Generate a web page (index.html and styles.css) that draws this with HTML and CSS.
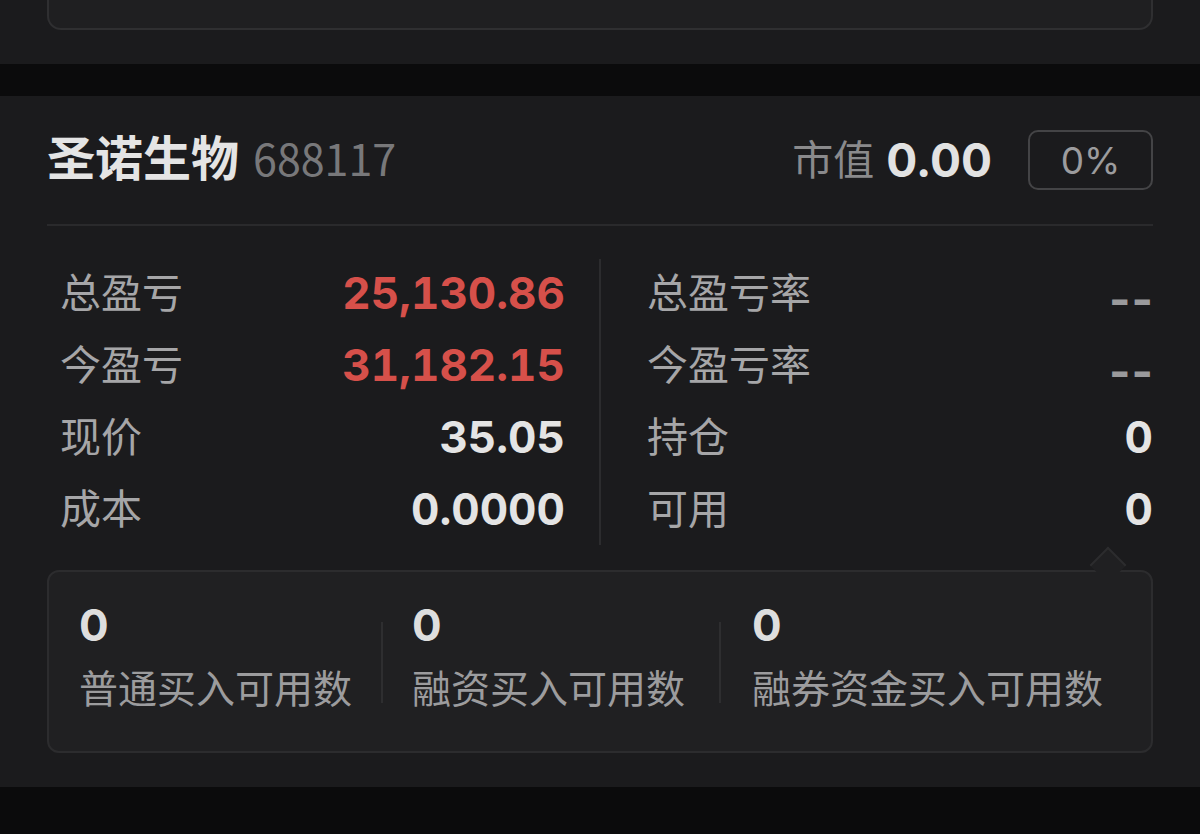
FILE: index.html
```html
<!DOCTYPE html>
<html lang="zh-CN">
<head>
<meta charset="utf-8">
<title>持仓</title>
<link rel="stylesheet" href="styles.css">
</head>
<body>
  <section class="section prev">
    <div class="prev-card"></div>
  </section>
  <div class="band"></div>
  <section class="section panel">
    <header class="head">
      <div class="name">
        <span class="title">圣诺生物</span>
        <span class="code">688117</span>
      </div>
      <div class="mv">
        <span class="mv-label">市值</span>
        <span class="mv-value">0.00</span>
        <span class="badge">0%</span>
      </div>
    </header>
    <div class="stats">
      <div class="col col-left">
        <div class="row"><span class="label">总盈亏</span><span class="val red">25,130.86</span></div>
        <div class="row"><span class="label">今盈亏</span><span class="val red">31,182.15</span></div>
        <div class="row"><span class="label">现价</span><span class="val">35.05</span></div>
        <div class="row"><span class="label">成本</span><span class="val">0.0000</span></div>
      </div>
      <div class="vline"></div>
      <div class="col col-right">
        <div class="row"><span class="label">总盈亏率</span><span class="val dash">--</span></div>
        <div class="row"><span class="label">今盈亏率</span><span class="val dash">--</span></div>
        <div class="row"><span class="label">持仓</span><span class="val">0</span></div>
        <div class="row"><span class="label">可用</span><span class="val">0</span></div>
      </div>
    </div>
    <div class="tip">
      <span class="tip-arrow"></span>
      <div class="tip-item">
        <div class="tip-num">0</div>
        <div class="tip-label">普通买入可用数</div>
      </div>
      <div class="tip-sep"></div>
      <div class="tip-item">
        <div class="tip-num">0</div>
        <div class="tip-label">融资买入可用数</div>
      </div>
      <div class="tip-sep tip-sep-wide"></div>
      <div class="tip-item">
        <div class="tip-num">0</div>
        <div class="tip-label">融券资金买入可用数</div>
      </div>
    </div>
  </section>
</body>
</html>
```

FILE: styles.css
```css
* { box-sizing: border-box; }
html, body {
  margin: 0;
  padding: 0;
  background: #0b0b0c;
  font-family: "Noto Sans CJK SC", sans-serif;
}
.section {
  background: #1b1b1d;
  padding: 0 47px;
}
.prev {
  height: 64px;
}
.prev-card {
  height: 30px;
  background: #1f1f21;
  border: 2px solid #2f2f31;
  border-top: none;
  border-radius: 0 0 14px 14px;
}
.band {
  height: 32px;
  background: #0b0b0c;
}
.panel {
  padding-bottom: 34px;
}
.head {
  display: flex;
  align-items: center;
  justify-content: space-between;
  height: 130px;
  border-bottom: 2px solid #2a2a2c;
}
.name {
  display: flex;
  align-items: baseline;
  gap: 14px;
  margin-bottom: 10px;
}
.title {
  font-size: 48px;
  font-weight: 700;
  color: #e4e4e4;
  line-height: 1;
}
.code {
  font-family: "Noto Sans CJK SC", sans-serif;
  font-size: 43px;
  font-weight: 400;
  color: #78787a;
  line-height: 1;
}
.mv {
  display: flex;
  align-items: center;
}
.mv-label {
  font-size: 41px;
  color: #8a8a8c;
  margin-right: 12px;
  margin-bottom: 6px;
}
.mv-value {
  font-family: Inter, sans-serif;
  font-size: 46px;
  font-weight: 700;
  color: #e2e2e2;
  margin-right: 36px;
}
.badge {
  width: 125px;
  height: 60px;
  border: 2px solid #444446;
  border-radius: 10px;
  display: flex;
  align-items: center;
  justify-content: center;
  font-family: Inter, sans-serif;
  font-size: 37px;
  color: #9c9c9e;
}
.stats {
  display: grid;
  grid-template-columns: 1fr 2px 1fr;
  padding-top: 31px;
}
.col {
  display: flex;
  flex-direction: column;
}
.col-left {
  padding: 0 34px 0 13px;
}
.col-right {
  padding-left: 46px;
}
.vline {
  background: #2c2c2e;
  margin-top: 2px;
}
.row {
  height: 72px;
  display: flex;
  align-items: center;
  justify-content: space-between;
}
.label {
  font-size: 41px;
  color: #a6a6a8;
  margin-bottom: 6px;
}
.val {
  font-family: Inter, sans-serif;
  font-size: 44px;
  font-weight: 700;
  font-variant-numeric: tabular-nums;
  color: #e4e4e4;
}
.val.red {
  color: #d6504a;
}
.val.dash {
  font-variant-numeric: normal;
  color: #9a9a9c;
  font-size: 46px;
  letter-spacing: 1px;
  margin-top: 12px;
  margin-right: -1px;
}
.tip {
  position: relative;
  margin-top: 25px;
  background: #202022;
  border: 2px solid #2c2c2e;
  border-radius: 12px;
  display: flex;
  padding: 27px 31px 39px 30px;
}
.tip-arrow {
  position: absolute;
  top: -20px;
  right: 30px;
  width: 26px;
  height: 26px;
  background: #202022;
  border-top: 2px solid #2c2c2e;
  border-left: 2px solid #2c2c2e;
  transform: rotate(45deg);
}
.tip-item {
  display: flex;
  flex-direction: column;
  gap: 9px;
}
.tip-num {
  font-family: Inter, sans-serif;
  font-size: 44px;
  font-weight: 700;
  color: #dedede;
  line-height: 52px;
}
.tip-label {
  font-size: 39px;
  color: #9c9c9e;
  line-height: 52px;
}
.tip-sep {
  width: 2px;
  height: 81px;
  margin: 23px 29px 0;
  background: #2e2e30;
}
.tip-sep-wide {
  margin-left: 34px;
  margin-right: 31px;
}
```
